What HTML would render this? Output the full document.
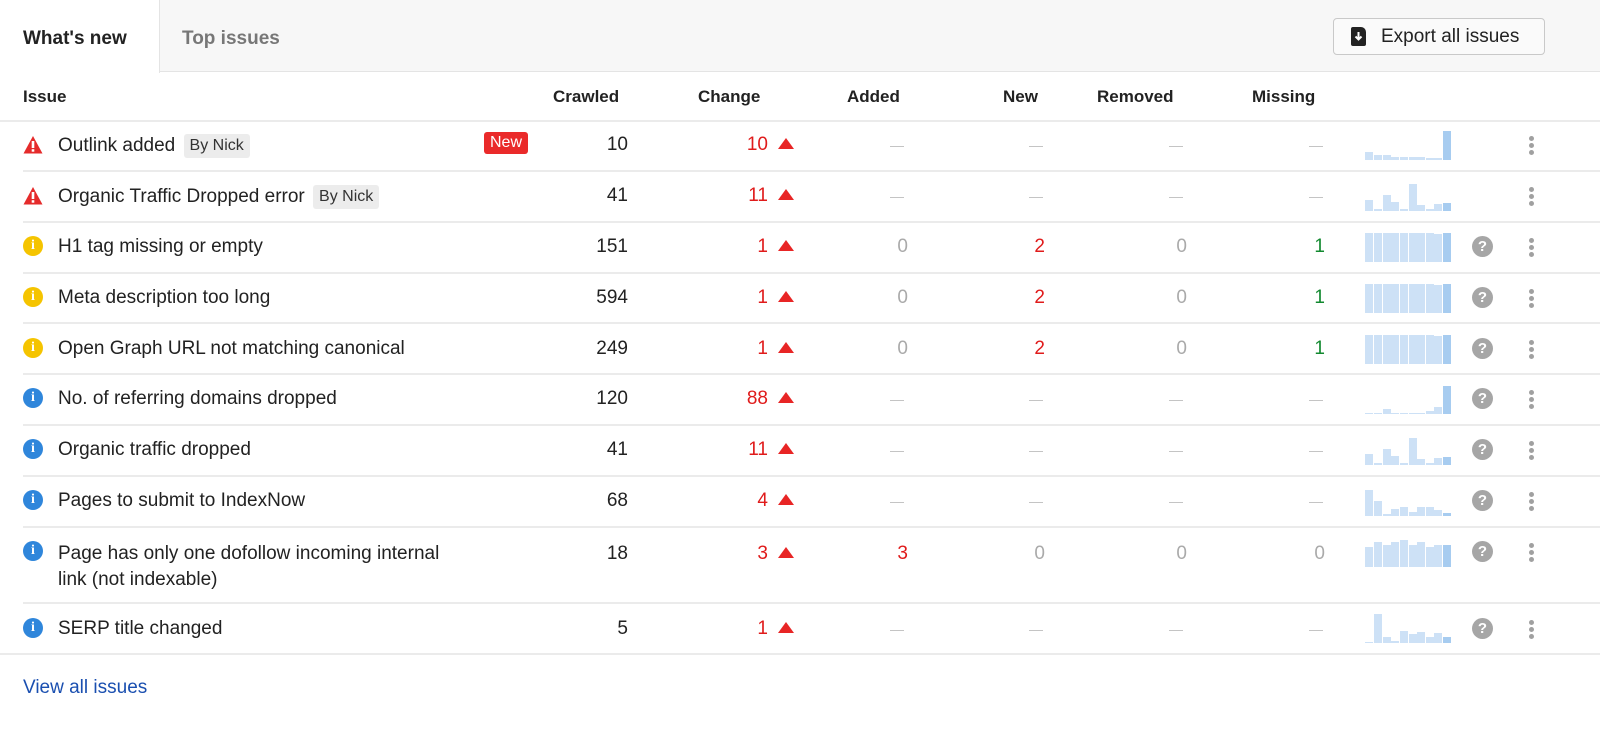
<!DOCTYPE html>
<html><head><meta charset="utf-8"><style>
*{margin:0;padding:0;box-sizing:border-box}
body{width:1600px;height:735px;background:#fff;font-family:"Liberation Sans",Arial,sans-serif;color:#222;position:relative;overflow:hidden}
.tabs{position:absolute;left:0;top:0;width:1600px;height:72px;background:#f7f7f7;border-bottom:1px solid #e4e4e4}
.t1{position:absolute;left:0;top:0;width:160px;height:73px;background:#fff;border-right:1px solid #e4e4e4;font-weight:bold;font-size:19px;padding:28px 0 0 23px;color:#222}
.t2{position:absolute;left:182px;top:28px;font-weight:bold;font-size:19px;color:#777}
.btn{position:absolute;left:1333px;top:18px;width:212px;height:37px;border:1px solid #c9c9c9;border-radius:4px;background:#fafafa;font-size:19px;color:#222;padding:7px 0 0 47px}
.btn .ic{position:absolute;left:17px;top:8px;width:15px;height:19px;background:#222;border-radius:2px 5px 2px 2px}
.hdr{position:absolute;top:87px;font-weight:bold;font-size:17px;color:#222}
.line{position:absolute;height:2px;background:#ebebeb}
.row{position:absolute;left:0;width:1600px}
.c{position:absolute;font-size:19px;line-height:22px}
.nm{left:58px;color:#222}
.r{text-align:right}
.red{color:#e01b1b}.grn{color:#12892f}.gry{color:#aaa}
.dash{position:absolute;width:14px;height:1px;background:#c4c4c4}
.tag{display:inline-block;background:#ececec;border-radius:3px;font-size:16px;padding:1px 6px;margin-left:3px;color:#333;vertical-align:1px}
.new{position:absolute;left:484px;background:#ea2a2a;color:#fff;font-size:16px;padding:2px 6px;border-radius:3px}
.tri{position:absolute;left:778px;width:0;height:0;border-left:8px solid transparent;border-right:8px solid transparent;border-bottom:11px solid #e82525}
.spark{position:absolute;left:1365px;width:86px;height:30px}
.spark i{position:absolute;bottom:0;width:7.5px;background:#cde1f6}
.spark i:last-child{background:#a7ccf0}
.q{position:absolute;left:1472px;width:21px;height:21px;border-radius:50%;background:#a6a6a6;color:#fff;font-weight:bold;font-size:15px;text-align:center;line-height:21px}
.dots{position:absolute;left:1529px;width:5px}
.dots b{display:block;width:5px;height:5px;border-radius:50%;background:#a0a0a0;margin-bottom:2px}
.ci{position:absolute;left:23px;width:20px;height:20px;border-radius:50%;color:#fff;font-weight:bold;font-size:14px;text-align:center;line-height:20px;font-family:"Liberation Serif",serif}
.yel{background:#f5c400}.blu{background:#2f86db}
.warn{position:absolute;left:23px}
a{position:absolute;left:23px;top:677px;font-size:19px;color:#1a4fb0;text-decoration:none}
</style></head><body>
<div class="tabs"><div class="t1">What's new</div><div class="t2">Top issues</div>
<div class="btn"><span class="ic"><svg width="15" height="19" viewBox="0 0 15 19"><path d="M7.5 5v7M4.5 9.5l3 3 3-3" stroke="#fff" stroke-width="2" fill="none"/></svg></span>Export all issues</div></div>

<div class="hdr" style="left:23px">Issue</div>
<div class="hdr" style="left:553px">Crawled</div>
<div class="hdr" style="left:698px">Change</div>
<div class="hdr" style="left:847px">Added</div>
<div class="hdr" style="left:1003px">New</div>
<div class="hdr" style="left:1097px">Removed</div>
<div class="hdr" style="left:1252px">Missing</div>
<div class="line" style="left:0;width:1600px;top:120px"></div>

<div class="row" style="top:121px;height:50px">
<svg class="warn" style="top:14px" width="20" height="19" viewBox="0 0 20 19"><path d="M10 1L19.5 18.5H0.5Z" fill="#e52b2b"/><rect x="8.7" y="6" width="2.6" height="7" fill="#fff"/><rect x="8.7" y="14.2" width="2.6" height="2.5" fill="#fff"/></svg>
<div class="c nm" style="top:13px">Outlink added <span class="tag">By Nick</span></div>
<div class="new" style="top:11px">New</div>
<div class="c r" style="right:972px;top:13px">10</div>
<div class="c r red" style="right:832px;top:13px">10</div><div class="tri" style="top:17px"></div>
<div class="dash" style="left:890px;top:25px"></div><div class="dash" style="left:1029px;top:25px"></div><div class="dash" style="left:1169px;top:25px"></div><div class="dash" style="left:1309px;top:25px"></div>
<div class="spark" style="top:9px"><i style="left:0;height:8px"></i><i style="left:9px;height:5px"></i><i style="left:18px;height:5px"></i><i style="left:26px;height:3px"></i><i style="left:35px;height:3px"></i><i style="left:44px;height:3px"></i><i style="left:52px;height:3px"></i><i style="left:61px;height:2px"></i><i style="left:69px;height:2px"></i><i style="left:78px;height:29px"></i></div>
<div class="dots" style="top:15px"><b></b><b></b><b></b></div>
</div>
<div class="line" style="left:23px;width:1577px;top:170px"></div>

<div class="row" style="top:171px;height:51px">
<svg class="warn" style="top:15px" width="20" height="19" viewBox="0 0 20 19"><path d="M10 1L19.5 18.5H0.5Z" fill="#e52b2b"/><rect x="8.7" y="6" width="2.6" height="7" fill="#fff"/><rect x="8.7" y="14.2" width="2.6" height="2.5" fill="#fff"/></svg>
<div class="c nm" style="top:14px">Organic Traffic Dropped error <span class="tag">By Nick</span></div>
<div class="c r" style="right:972px;top:14px">41</div>
<div class="c r red" style="right:832px;top:14px">11</div><div class="tri" style="top:18px"></div>
<div class="dash" style="left:890px;top:26px"></div><div class="dash" style="left:1029px;top:26px"></div><div class="dash" style="left:1169px;top:26px"></div><div class="dash" style="left:1309px;top:26px"></div>
<div class="spark" style="top:10px"><i style="left:0;height:11px"></i><i style="left:9px;height:2px"></i><i style="left:18px;height:16px"></i><i style="left:26px;height:9px"></i><i style="left:35px;height:2px"></i><i style="left:44px;height:27px"></i><i style="left:52px;height:6px"></i><i style="left:61px;height:2px"></i><i style="left:69px;height:7px"></i><i style="left:78px;height:8px"></i></div>
<div class="dots" style="top:16px"><b></b><b></b><b></b></div>
</div>
<div class="line" style="left:23px;width:1577px;top:221px"></div>

<div class="row" style="top:222px;height:51px">
<div class="ci yel" style="top:14px">i</div>
<div class="c nm" style="top:14px">H1 tag missing or empty</div>
<div class="c r" style="right:972px;top:14px">151</div>
<div class="c r red" style="right:832px;top:14px">1</div><div class="tri" style="top:18px"></div>
<div class="c r gry" style="right:692px;top:14px">0</div><div class="c r red" style="right:555px;top:14px">2</div><div class="c r gry" style="right:413px;top:14px">0</div><div class="c r grn" style="right:275px;top:14px">1</div>
<div class="spark" style="top:10px"><i style="left:0;height:29px"></i><i style="left:9px;height:29px"></i><i style="left:18px;height:29px"></i><i style="left:26px;height:29px"></i><i style="left:35px;height:29px"></i><i style="left:44px;height:29px"></i><i style="left:52px;height:29px"></i><i style="left:61px;height:29px"></i><i style="left:69px;height:28px"></i><i style="left:78px;height:29px"></i></div>
<div class="q" style="top:14px">?</div><div class="dots" style="top:16px"><b></b><b></b><b></b></div>
</div>
<div class="line" style="left:23px;width:1577px;top:272px"></div>

<div class="row" style="top:273px;height:50px">
<div class="ci yel" style="top:14px">i</div>
<div class="c nm" style="top:14px">Meta description too long</div>
<div class="c r" style="right:972px;top:14px">594</div>
<div class="c r red" style="right:832px;top:14px">1</div><div class="tri" style="top:18px"></div>
<div class="c r gry" style="right:692px;top:14px">0</div><div class="c r red" style="right:555px;top:14px">2</div><div class="c r gry" style="right:413px;top:14px">0</div><div class="c r grn" style="right:275px;top:14px">1</div>
<div class="spark" style="top:10px"><i style="left:0;height:29px"></i><i style="left:9px;height:29px"></i><i style="left:18px;height:29px"></i><i style="left:26px;height:29px"></i><i style="left:35px;height:29px"></i><i style="left:44px;height:29px"></i><i style="left:52px;height:29px"></i><i style="left:61px;height:29px"></i><i style="left:69px;height:28px"></i><i style="left:78px;height:29px"></i></div>
<div class="q" style="top:14px">?</div><div class="dots" style="top:16px"><b></b><b></b><b></b></div>
</div>
<div class="line" style="left:23px;width:1577px;top:322px"></div>

<div class="row" style="top:323px;height:51px">
<div class="ci yel" style="top:15px">i</div>
<div class="c nm" style="top:15px">Open Graph URL not matching canonical</div>
<div class="c r" style="right:972px;top:15px">249</div>
<div class="c r red" style="right:832px;top:15px">1</div><div class="tri" style="top:19px"></div>
<div class="c r gry" style="right:692px;top:15px">0</div><div class="c r red" style="right:555px;top:15px">2</div><div class="c r gry" style="right:413px;top:15px">0</div><div class="c r grn" style="right:275px;top:15px">1</div>
<div class="spark" style="top:11px"><i style="left:0;height:29px"></i><i style="left:9px;height:29px"></i><i style="left:18px;height:29px"></i><i style="left:26px;height:29px"></i><i style="left:35px;height:29px"></i><i style="left:44px;height:29px"></i><i style="left:52px;height:29px"></i><i style="left:61px;height:29px"></i><i style="left:69px;height:28px"></i><i style="left:78px;height:29px"></i></div>
<div class="q" style="top:15px">?</div><div class="dots" style="top:17px"><b></b><b></b><b></b></div>
</div>
<div class="line" style="left:23px;width:1577px;top:373px"></div>

<div class="row" style="top:374px;height:51px">
<div class="ci blu" style="top:14px">i</div>
<div class="c nm" style="top:14px">No. of referring domains dropped</div>
<div class="c r" style="right:972px;top:14px">120</div>
<div class="c r red" style="right:832px;top:14px">88</div><div class="tri" style="top:18px"></div>
<div class="dash" style="left:890px;top:26px"></div><div class="dash" style="left:1029px;top:26px"></div><div class="dash" style="left:1169px;top:26px"></div><div class="dash" style="left:1309px;top:26px"></div>
<div class="spark" style="top:10px"><i style="left:0;height:1px"></i><i style="left:9px;height:1px"></i><i style="left:18px;height:5px"></i><i style="left:26px;height:1px"></i><i style="left:35px;height:1px"></i><i style="left:44px;height:1px"></i><i style="left:52px;height:1px"></i><i style="left:61px;height:3px"></i><i style="left:69px;height:7px"></i><i style="left:78px;height:28px"></i></div>
<div class="q" style="top:14px">?</div><div class="dots" style="top:16px"><b></b><b></b><b></b></div>
</div>
<div class="line" style="left:23px;width:1577px;top:424px"></div>

<div class="row" style="top:425px;height:51px">
<div class="ci blu" style="top:14px">i</div>
<div class="c nm" style="top:14px">Organic traffic dropped</div>
<div class="c r" style="right:972px;top:14px">41</div>
<div class="c r red" style="right:832px;top:14px">11</div><div class="tri" style="top:18px"></div>
<div class="dash" style="left:890px;top:26px"></div><div class="dash" style="left:1029px;top:26px"></div><div class="dash" style="left:1169px;top:26px"></div><div class="dash" style="left:1309px;top:26px"></div>
<div class="spark" style="top:10px"><i style="left:0;height:11px"></i><i style="left:9px;height:2px"></i><i style="left:18px;height:16px"></i><i style="left:26px;height:9px"></i><i style="left:35px;height:2px"></i><i style="left:44px;height:27px"></i><i style="left:52px;height:6px"></i><i style="left:61px;height:2px"></i><i style="left:69px;height:7px"></i><i style="left:78px;height:8px"></i></div>
<div class="q" style="top:14px">?</div><div class="dots" style="top:16px"><b></b><b></b><b></b></div>
</div>
<div class="line" style="left:23px;width:1577px;top:475px"></div>

<div class="row" style="top:476px;height:51px">
<div class="ci blu" style="top:14px">i</div>
<div class="c nm" style="top:14px">Pages to submit to IndexNow</div>
<div class="c r" style="right:972px;top:14px">68</div>
<div class="c r red" style="right:832px;top:14px">4</div><div class="tri" style="top:18px"></div>
<div class="dash" style="left:890px;top:26px"></div><div class="dash" style="left:1029px;top:26px"></div><div class="dash" style="left:1169px;top:26px"></div><div class="dash" style="left:1309px;top:26px"></div>
<div class="spark" style="top:10px"><i style="left:0;height:26px"></i><i style="left:9px;height:15px"></i><i style="left:18px;height:2px"></i><i style="left:26px;height:7px"></i><i style="left:35px;height:9px"></i><i style="left:44px;height:4px"></i><i style="left:52px;height:9px"></i><i style="left:61px;height:9px"></i><i style="left:69px;height:6px"></i><i style="left:78px;height:3px"></i></div>
<div class="q" style="top:14px">?</div><div class="dots" style="top:16px"><b></b><b></b><b></b></div>
</div>
<div class="line" style="left:23px;width:1577px;top:526px"></div>

<div class="row" style="top:527px;height:77px">
<div class="ci blu" style="top:14px">i</div>
<div class="c nm" style="top:14px;line-height:26px">Page has only one dofollow incoming internal<br>link (not indexable)</div>
<div class="c r" style="right:972px;top:16px">18</div>
<div class="c r red" style="right:832px;top:16px">3</div><div class="tri" style="top:20px"></div>
<div class="c r red" style="right:692px;top:16px">3</div><div class="c r gry" style="right:555px;top:16px">0</div><div class="c r gry" style="right:413px;top:16px">0</div><div class="c r gry" style="right:275px;top:16px">0</div>
<div class="spark" style="top:10px"><i style="left:0;height:20px"></i><i style="left:9px;height:25px"></i><i style="left:18px;height:22px"></i><i style="left:26px;height:25px"></i><i style="left:35px;height:27px"></i><i style="left:44px;height:22px"></i><i style="left:52px;height:25px"></i><i style="left:61px;height:20px"></i><i style="left:69px;height:22px"></i><i style="left:78px;height:22px"></i></div>
<div class="q" style="top:14px">?</div><div class="dots" style="top:16px"><b></b><b></b><b></b></div>
</div>
<div class="line" style="left:23px;width:1577px;top:602px"></div>

<div class="row" style="top:603px;height:51px">
<div class="ci blu" style="top:15px">i</div>
<div class="c nm" style="top:15px">SERP title changed</div>
<div class="c r" style="right:972px;top:15px">5</div>
<div class="c r red" style="right:832px;top:15px">1</div><div class="tri" style="top:19px"></div>
<div class="dash" style="left:890px;top:27px"></div><div class="dash" style="left:1029px;top:27px"></div><div class="dash" style="left:1169px;top:27px"></div><div class="dash" style="left:1309px;top:27px"></div>
<div class="spark" style="top:10px"><i style="left:0;height:1px"></i><i style="left:9px;height:29px"></i><i style="left:18px;height:6px"></i><i style="left:26px;height:2px"></i><i style="left:35px;height:12px"></i><i style="left:44px;height:9px"></i><i style="left:52px;height:11px"></i><i style="left:61px;height:6px"></i><i style="left:69px;height:10px"></i><i style="left:78px;height:6px"></i></div>
<div class="q" style="top:15px">?</div><div class="dots" style="top:17px"><b></b><b></b><b></b></div>
</div>
<div class="line" style="left:0;width:1600px;top:653px"></div>

<a>View all issues</a>
</body></html>
